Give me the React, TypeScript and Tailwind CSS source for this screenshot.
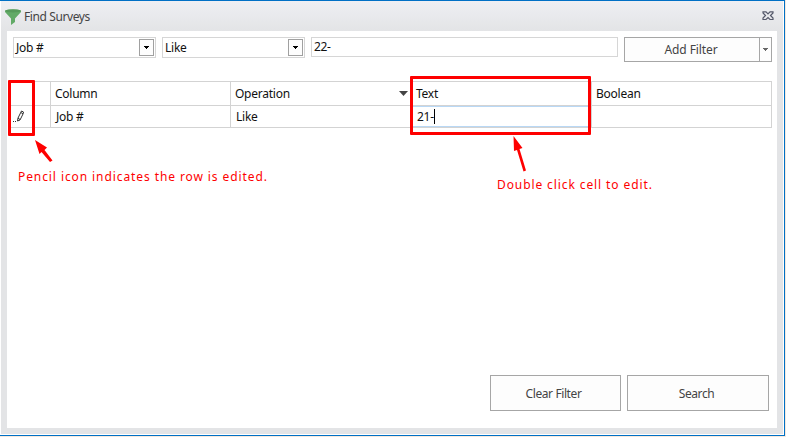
import React from "react";

function Combo({ label }: { label: string }) {
  return (
    <div className="flex h-[21px] w-[143px] shrink-0 items-start justify-between border border-[#d6d6d6] bg-white">
      <span className="pl-[2px] leading-[20px]">{label}</span>
      <span className="mt-px mr-px flex h-[17px] w-[15px] items-center justify-center border border-[#a0a0a0] bg-[#fdfdfd]">
        <svg width="5" height="3" viewBox="0 0 5 3" shapeRendering="crispEdges">
          <path d="M0 0h5v1H0zM1 1h3v1H1zM2 2h1v1H2z" fill="#000" />
        </svg>
      </span>
    </div>
  );
}

function TitleBar() {
  return (
    <header className="flex h-[30px] items-start justify-between bg-linear-to-b from-[#eeeff3] to-[#e3e4e6] pt-[8px] pr-[9px] pl-[4px]">
      <div className="flex">
        <svg width="16" height="16" viewBox="0 0 16 16">
          <path d="M0 1.500Q8-.8 16 1.500V3L10 9.500V13L6 16V9.500L0 3Z" fill="#62aa67" />
          <ellipse cx="8" cy="1.900" rx="7.700" ry="1.500" fill="#569a5b" />
        </svg>
        <span className="ml-[3px] leading-[16px] tracking-[-0.400px] text-[#444]">Find Surveys</span>
      </div>
      <svg className="mt-[2px]" width="12" height="10" viewBox="0 0 12 10" fill="none" stroke="#55596b" strokeWidth="1.200">
        <path d="M1 .8H4L6 2.800 8 .8H11V2L8.500 4.500 11 7V8.500H8L6 6.500 4 8.500H1V7L3.500 4.500 1 2Z" />
      </svg>
    </header>
  );
}

function FilterBar() {
  return (
    <div className="flex items-start gap-[6px]">
      <Combo label="Job #" />
      <Combo label="Like" />
      <div className="h-[20px] w-[307px] shrink-0 border border-[#d6d6d6] pl-[2px] leading-[17px] tracking-[-0.400px]">22-</div>
      <button className="flex h-[25px] w-[148px] shrink-0 border border-[#a6a6a6] bg-[#fdfdfd] text-[#444]">
        <span className="flex-1 pr-[2px] text-center leading-[23px] tracking-[-0.100px]">Add Filter</span>
        <span className="flex h-full w-[12px] items-center justify-center border-l border-[#a6a6a6]">
          <svg width="5" height="3" viewBox="0 0 5 3" shapeRendering="crispEdges">
            <path d="M0 0h5v1H0zM1 1h3v1H1zM2 2h1v1H2z" fill="#666" />
          </svg>
        </span>
      </button>
    </div>
  );
}

function Grid() {
  return (
    <div className="grid w-[764px] grid-cols-[43px_180px_181px_180px_180px] grid-rows-[24px_22px] border-t border-[#d3d3d3] leading-[23px] *:border-r *:border-b *:border-[#d3d3d3]">
      <div />
      <div className="pl-[4px]">Column</div>
      <div className="flex items-center justify-between pr-[3px] pl-[4px]">
        <span>Operation</span>
        <svg width="9" height="5" viewBox="0 0 9 5"><path d="M0 0H9L4.500 5Z" fill="#444" /></svg>
      </div>
      <div className="pl-[4px]">Text</div>
      <div className="pl-[4px]">Boolean</div>
      <div className="pt-[4px] pl-[5px]">
        <svg width="12" height="13" viewBox="0 0 12 13" fill="none" stroke="#333">
          <path d="M4.500 11 5 8 8.500 1 10.500 2 10 4 7 10 4.500 11M5 8 7 9.500M8 2.500 10 4" />
          <path d="M0 11.500H1M2 11.500H3" />
        </svg>
      </div>
      <div className="pl-[5px] leading-[21px]">Job #</div>
      <div className="pl-[5px] leading-[21px]">Like</div>
      <div className="flex pl-[5px] leading-[21px] shadow-[inset_0_1px_#b9d8f5,inset_0_-1px_#b9d8f5]">
        21-<span className="mt-[3px] h-[15px] w-px bg-black" />
      </div>
      <div />
    </div>
  );
}

function Annotations() {
  return (
    <div className="pointer-events-none absolute inset-0 text-[12px] leading-[16px] whitespace-nowrap text-[#fe0000]">
      <div className="absolute top-[80px] left-[8px] h-[56px] w-[27px] rounded-[1px] border-3 border-[#fe0000]" />
      <div className="absolute top-[76px] left-[410px] h-[59px] w-[181px] rounded-[1px] border-3 border-[#fe0000]" />
      <svg className="absolute inset-0" width="786" height="437" fill="#fe0000">
        <path d="M35 140 47 147.500 44.500 150 52.500 160.500 50 162 41.500 152 39.500 154Z" />
        <path d="M513.500 136 522.500 148 519.500 149 526 170.500 523.500 171.500 517 150 514 151Z" />
      </svg>
      <span className="absolute top-[169px] left-[18px] tracking-[0.910px]">Pencil icon indicates the row is edited.</span>
      <span className="absolute top-[177px] left-[497px] tracking-[0.900px]">Double click cell to edit.</span>
    </div>
  );
}

export default function App() {
  return (
    <div className="relative h-[437px] w-[786px] bg-[#f7e9dc] font-['Noto_Sans','Open_Sans',sans-serif] text-[12px] tracking-[-0.250px] text-[#111]">
      <div className="flex h-[436px] w-[785px] flex-col border-t border-r border-b border-[#0070c5] bg-white pr-px pb-px pl-px">
        <TitleBar />
        <div className="flex-1 bg-[#e3e4e6] pr-[6px] pb-[6px] pl-[6px]">
          <main className="flex h-full flex-col bg-white">
            <div className="pt-[6px] pr-[5px] pl-[6px]"><FilterBar /></div>
            <div className="mt-[19px] pl-px"><Grid /></div>
            <div className="mt-auto mb-[17px] flex justify-end gap-[6px] pr-[8px] leading-[33px] text-[#444]">
              <button className="h-[36px] w-[131px] border border-[#a6a6a6] bg-[#fdfdfd] pr-[4px] tracking-[-0.400px]">Clear Filter</button>
              <button className="h-[36px] w-[142px] border border-[#a6a6a6] bg-[#fdfdfd] pr-[3px] tracking-[-0.400px]">Search</button>
            </div>
          </main>
        </div>
      </div>
      <Annotations />
    </div>
  );
}
